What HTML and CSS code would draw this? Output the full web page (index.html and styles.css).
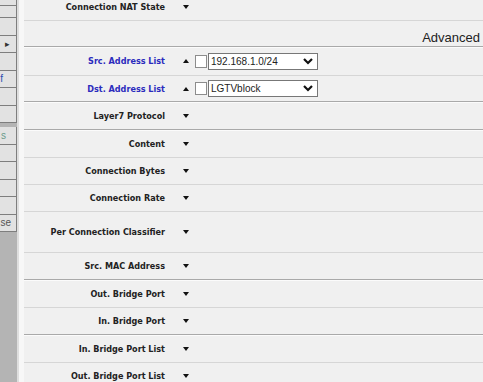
FILE: index.html
```html
<!DOCTYPE html>
<html lang="en">
<head>
    <meta charset="UTF-8">
    <title>Firewall Rule - Advanced</title>
    <link rel="stylesheet" href="styles.css">
</head>
<body>
    <div class="page">
        <!-- Left menu (scrolled, only the edge shows) -->
        <nav class="menu">
            <div class="btn b-top"></div>
            <div class="btn b-short"></div>
            <div class="btn"></div>
            <div class="btn"><span class="mark">&#9656;</span></div>
            <div class="btn"></div>
            <div class="btn"><span class="txt blue pr14">f</span></div>
            <div class="btn"></div>
            <div class="btn"></div>
            <div class="menu-gap"></div>
            <div class="btn"><span class="txt green pr10">s</span></div>
            <div class="btn"></div>
            <div class="btn"></div>
            <div class="btn"></div>
            <div class="btn"></div>
            <div class="btn"><span class="txt grey pr5">se</span></div>
        </nav>
        <div class="gutter"></div>

        <!-- Rule form -->
        <main class="form">
            <div class="row first">
                <label class="name">Connection NAT State</label>
                <span class="arrow down"></span>
            </div>
            <div class="row header group">
                <span class="title">Advanced</span>
            </div>
            <div class="row r28">
                <label class="name blue">Src. Address List</label>
                <span class="arrow up"></span>
                <span class="check"></span>
                <div class="select">
                    <span>192.168.1.0/24</span>
                    <svg width="10" height="7" viewBox="0 0 10 7"><polyline points="1,1 5,5 9,1" fill="none" stroke="#111" stroke-width="2.2"/></svg>
                </div>
            </div>
            <div class="row r25 group">
                <label class="name blue">Dst. Address List</label>
                <span class="arrow up"></span>
                <span class="check"></span>
                <div class="select">
                    <span>LGTVblock</span>
                    <svg width="10" height="7" viewBox="0 0 10 7"><polyline points="1,1 5,5 9,1" fill="none" stroke="#111" stroke-width="2.2"/></svg>
                </div>
            </div>
            <div class="row r27 group">
                <label class="name">Layer7 Protocol</label>
                <span class="arrow down"></span>
            </div>
            <div class="row r27">
                <label class="name">Content</label>
                <span class="arrow down"></span>
            </div>
            <div class="row">
                <label class="name">Connection Bytes</label>
                <span class="arrow down"></span>
            </div>
            <div class="row">
                <label class="name">Connection Rate</label>
                <span class="arrow down"></span>
            </div>
            <div class="row tall">
                <label class="name">Per Connection Classifier</label>
                <span class="arrow down"></span>
            </div>
            <div class="row group">
                <label class="name">Src. MAC Address</label>
                <span class="arrow down"></span>
            </div>
            <div class="row r27">
                <label class="name">Out. Bridge Port</label>
                <span class="arrow down"></span>
            </div>
            <div class="row group">
                <label class="name">In. Bridge Port</label>
                <span class="arrow down"></span>
            </div>
            <div class="row r27">
                <label class="name">In. Bridge Port List</label>
                <span class="arrow down"></span>
            </div>
            <div class="row">
                <label class="name">Out. Bridge Port List</label>
                <span class="arrow down"></span>
            </div>
        </main>
    </div>
</body>
</html>
```

FILE: styles.css
```css
body {
    margin: 0;
    padding: 0;
    background-color: #f0f0f0;
    font-family: "DejaVu Sans Condensed", "DejaVu Sans", sans-serif;
    overflow: hidden;
}
.page {
    display: flex;
    height: 382px;
}

/* Left menu */
.menu {
    width: 17px;
    flex-shrink: 0;
    background-color: #b4b4b4;
    display: flex;
    flex-direction: column;
}
.btn {
    height: 16.5px;
    flex-shrink: 0;
    background-color: #e2e2e2;
    border-bottom: 1px solid #7e7e7e;
    border-right: 1px solid #7e7e7e;
    display: flex;
    justify-content: flex-end;
    align-items: center;
    overflow: hidden;
    font-family: "Liberation Sans", Arial, sans-serif;
    font-size: 10px;
}
.b-top {
    height: 5px;
}
.b-short {
    height: 11px;
}
.menu-gap {
    height: 4px;
    flex-shrink: 0;
}
.mark {
    font-size: 9px;
    color: #333;
    padding-right: 6px;
}
.txt {
    white-space: nowrap;
}
.txt.blue {
    color: #2a4fb0;
}
.txt.green {
    color: #6a9a8a;
}
.txt.grey {
    color: #555;
}
.pr14 {
    padding-right: 13px;
}
.pr10 {
    padding-right: 10px;
}
.pr5 {
    padding-right: 5px;
}
.gutter {
    width: 5px;
    flex-shrink: 0;
    background-color: #f7f7f7;
    border-left: 2px solid #dedede;
}

/* Form rows */
.form {
    flex: 1;
    display: flex;
    flex-direction: column;
}
.row {
    height: 26px;
    flex-shrink: 0;
    display: flex;
    align-items: center;
    border-bottom: 1px solid #d6d6d6;
}
.row.first {
    margin-top: -6px;
}
.row.group {
    border-bottom-color: #a9a9a9;
    box-shadow: 0 1px 0 #fbfbfb;
}
.row.header {
    height: 25px;
    justify-content: flex-end;
    align-items: flex-end;
}
.row.r25 { height: 25px; }
.row.r27 { height: 27px; }
.row.r28 { height: 28px; }
.row.tall { height: 40px; }

.title {
    font-family: "Liberation Sans", Arial, sans-serif;
    font-size: 13px;
    line-height: 13px;
    color: #222;
    padding-right: 3px;
    padding-bottom: 2px;
}
.name {
    width: 141px;
    flex-shrink: 0;
    text-align: right;
    font-size: 9px;
    font-weight: bold;
    font-stretch: condensed;
    color: #222;
    white-space: nowrap;
}
.name.blue {
    color: #2b2bbd;
}
.arrow {
    width: 0;
    height: 0;
    margin-left: 18px;
    border-left: 3px solid transparent;
    border-right: 3px solid transparent;
}
.arrow.down {
    border-top: 4px solid #111;
}
.arrow.up {
    border-bottom: 4px solid #111;
}
.check {
    width: 10px;
    height: 11px;
    margin-left: 6px;
    background-color: #fff;
    border: 1px solid #8c8c8c;
}
.select {
    width: 110px;
    height: 17px;
    margin-left: 1px;
    background-color: #fff;
    border: 1px solid #777;
    display: flex;
    align-items: center;
    justify-content: space-between;
    padding: 0 4px 0 2px;
    box-sizing: border-box;
    font-family: "Liberation Sans", Arial, sans-serif;
    font-size: 10px;
    color: #222;
}
```
